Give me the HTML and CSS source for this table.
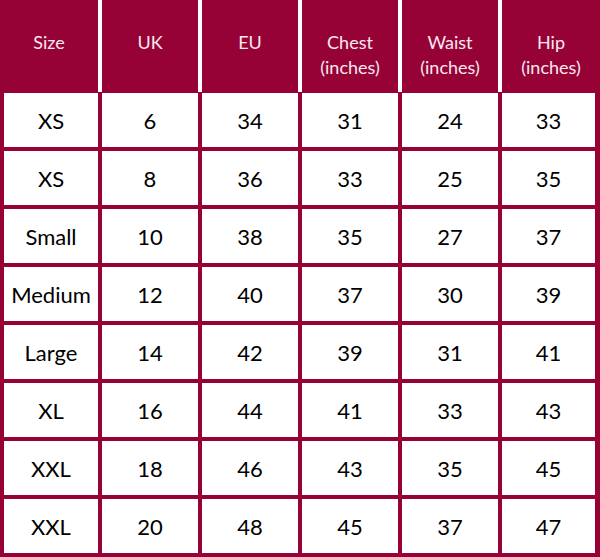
FILE: index.html
```html
<!DOCTYPE html>
<html lang="en">
<head>
<meta charset="utf-8">
<title>Size Chart</title>
<link rel="stylesheet" href="styles.css">
</head>
<body>
<div class="chart">
  <div class="head">
    <div class="hcell">Size</div>
    <div class="hcell">UK</div>
    <div class="hcell">EU</div>
    <div class="hcell">Chest<br>(inches)</div>
    <div class="hcell">Waist<br>(inches)</div>
    <div class="hcell">Hip<br>(inches)</div>
  </div>
  <div class="body">
    <div class="cell">XS</div><div class="cell">6</div><div class="cell">34</div><div class="cell">31</div><div class="cell">24</div><div class="cell">33</div>
    <div class="cell">XS</div><div class="cell">8</div><div class="cell">36</div><div class="cell">33</div><div class="cell">25</div><div class="cell">35</div>
    <div class="cell">Small</div><div class="cell">10</div><div class="cell">38</div><div class="cell">35</div><div class="cell">27</div><div class="cell">37</div>
    <div class="cell">Medium</div><div class="cell">12</div><div class="cell">40</div><div class="cell">37</div><div class="cell">30</div><div class="cell">39</div>
    <div class="cell">Large</div><div class="cell">14</div><div class="cell">42</div><div class="cell">39</div><div class="cell">31</div><div class="cell">41</div>
    <div class="cell">XL</div><div class="cell">16</div><div class="cell">44</div><div class="cell">41</div><div class="cell">33</div><div class="cell">43</div>
    <div class="cell">XXL</div><div class="cell">18</div><div class="cell">46</div><div class="cell">43</div><div class="cell">35</div><div class="cell">45</div>
    <div class="cell">XXL</div><div class="cell">20</div><div class="cell">48</div><div class="cell">45</div><div class="cell">37</div><div class="cell">47</div>
  </div>
</div>
</body>
</html>
```
FILE: styles.css
```css
html, body {
  margin: 0;
  padding: 0;
  background: #ffffff;
}

.chart {
  width: 600px;
  height: 557px;
  display: flex;
  flex-direction: column;
  background: #970236;
  font-family: Lato, "Open Sans", sans-serif;
}

.head {
  display: grid;
  grid-template-columns: 98px 96px 96px 96px 96px 98px;
  column-gap: 4px;
  background: #ffffff;
  height: 92px;
  margin-bottom: 1px;
}

.hcell {
  background: #970236;
  color: #f7e9ef;
  font-size: 18px;
  line-height: 25px;
  text-align: center;
  padding-top: 30px;
  box-sizing: border-box;
}

.body {
  flex: 1;
  display: grid;
  grid-template-columns: 94px 96px 96px 96px 96px 93px;
  grid-template-rows: repeat(8, 1fr);
  gap: 4px;
  padding: 0 5px 4px 4px;
}

.cell {
  background: #ffffff;
  color: #000000;
  font-size: 22px;
  display: flex;
  align-items: center;
  justify-content: center;
}
```
